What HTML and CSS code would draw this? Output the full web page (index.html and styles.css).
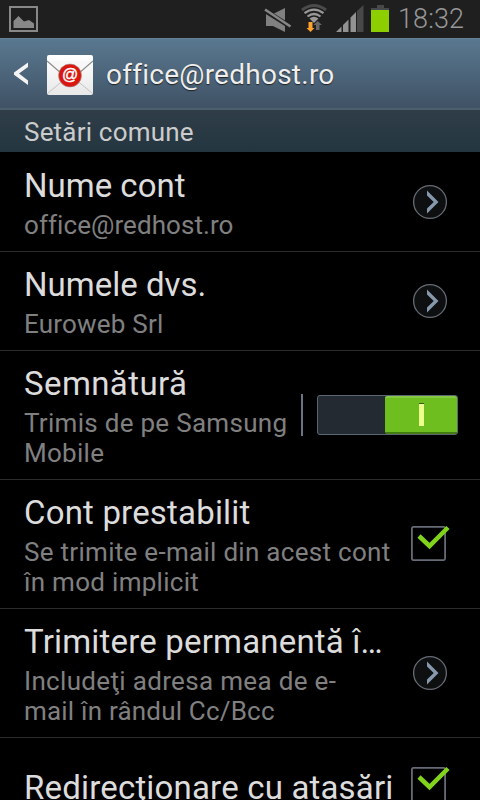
FILE: index.html
```html
<!DOCTYPE html>
<html lang="ro">
<head>
<meta charset="utf-8">
<title>office@redhost.ro</title>
<link rel="stylesheet" href="styles.css">
</head>
<body>
<svg class="defs" width="0" height="0">
  <symbol id="go" viewBox="0 0 36 36"><circle cx="18" cy="18" r="16.4" fill="#0d0f11" stroke="#666b73" stroke-width="1.3"/><path d="M15 6.500 26.500 18 15 29.500V24.500L21.700 18 15 11.500Z" fill="#8698ab"/></symbol>
  <symbol id="check" viewBox="0 0 40 38"><rect x="1.9" y="3.9" width="33.2" height="33.2" rx="1.5" fill="none" stroke="#666b75" stroke-width="1.8"/><path d="M9 13 19.5 23 38 4.500" fill="none" stroke="#82d31c" stroke-width="4.500"/></symbol>
</svg>
<div class="status">
  <svg class="shot" width="29" height="26" viewBox="0 0 29 26"><rect x="1" y="1" width="27" height="24" fill="none" stroke="#888" stroke-width="2"/><path d="M4.500 22V15L9.500 10 15 15.500 20 14 25 17.500V22Z" fill="#888"/></svg>
  <svg class="indicators" width="130" height="38" viewBox="260 0 130 38">
    <path d="M266 14H273L285 8V32L273 26H266Z" fill="#808080"/><path d="M264 10 291 27" stroke="#1f1f1f" stroke-width="5"/><path d="M265 9.500 290.500 26.500" stroke="#858585" stroke-width="2.600"/>
    <g fill="none" stroke-width="2.200"><path d="M302 10Q314 1 326 10" stroke="#4b4b4b" stroke-width="3"/><path d="M304.500 13.200Q314 6 323.500 13.200M307.500 16.500Q314 11.500 320.500 16.500" stroke="#999"/></g><path d="M309.500 18.500Q314 15 318.500 18.500L314 23Z" fill="#999"/>
    <path d="M308.500 22H312.500V28H314.500L310.500 32 306.500 28H308.500Z" fill="#ffa02f"/><path d="M316 30V25H313.500L317.700 21 322 25H319.500V30Z" fill="#666"/>
    <path d="M336 32 341.500 26.500V32ZM343 32V25L348.500 19.500V32ZM350.500 32V17.500L356 12V32Z" fill="#929292"/><path d="M357 32V11L363.500 5V32Z" fill="#484848"/>
    <path d="M377 5H384V8H389V10H371V8H377Z" fill="#484848"/><path d="M371 10H389V32H371Z" fill="#8dce00"/>
  </svg>
  <span class="clock">18:32</span>
</div>
<header class="bar">
  <svg class="back" width="14" height="24" viewBox="0 0 14 24"><path d="M14 .5V5L5 11.500 14 18.500V23L0 12.700V10.500Z" fill="#f4f4f4"/></svg>
  <svg class="mail" width="46" height="40" viewBox="0 0 46 40">
    <defs><linearGradient id="paper" x2="0" y2="1"><stop stop-color="#fff"/><stop offset="1" stop-color="#e8e8e8"/></linearGradient></defs>
    <rect width="46" height="40" rx="2" fill="url(#paper)"/><path d="M1 38 18 24M45 38 28 24" stroke="#c4c4c4"/><path d="M0 6 19 22.500Q23 25 27 22.500L46 6" fill="#f7f7f7" stroke="#8b8b8b" stroke-width="1.200"/>
    <circle cx="23" cy="20.500" r="11.500" fill="#d9170f" stroke="#a59c9c" stroke-width=".6"/><text class="at" x="23" y="25" text-anchor="middle">@</text>
  </svg>
  <h1>office@redhost.ro</h1>
</header>
<h2>Setări comune</h2>
<main>
  <section class="row first"><div class="copy"><div class="title t1">Nume cont</div><div class="summary s1">office@redhost.ro</div></div><svg class="go"><use href="#go"/></svg></section>
  <section class="row"><div class="copy"><div class="title t2">Numele dvs.</div><div class="summary s2">Euroweb Srl</div></div><svg class="go"><use href="#go"/></svg></section>
  <section class="row tall"><div class="copy"><div class="title t3">Semnătură</div><div class="summary s3">Trimis de pe Samsung<br>Mobile</div></div><div class="divider"></div><div class="switch"><div class="thumb"><i></i></div></div></section>
  <section class="row tall"><div class="copy"><div class="title t4">Cont prestabilit</div><div class="summary s4">Se trimite e-mail din acest cont<br>în mod implicit</div></div><svg class="check"><use href="#check"/></svg></section>
  <section class="row tall"><div class="copy"><div class="title t5">Trimitere permanentă î…</div><div class="summary s5">Includeţi adresa mea de e-<br><span class="line2">mail în rândul Cc/Bcc</span></div></div><svg class="go"><use href="#go"/></svg></section>
  <section class="row last"><div class="copy"><div class="title t6">Redirecţionare cu ataşări</div></div><svg class="check"><use href="#check"/></svg></section>
</main>
</body>
</html>
```
FILE: styles.css
```css
* { box-sizing: border-box; }
html, body { margin: 0; height: 800px; overflow: hidden; background: #000; }
body { width: 480px; font-family: Roboto, "Noto Sans", sans-serif; display: flex; flex-direction: column; }
.defs { display: block; flex: none; height: 0; }
.status { flex: none; height: 38px; background: #1f1f1f; display: flex; }
.shot { margin: 6px 221px 0 9px; flex: none; }
.indicators { flex: none; margin-left: 1px; }
.clock { margin: 3px 0 0 8px; font-size: 27px; line-height: 32px; color: #979797; letter-spacing: .1px; font-weight: 300; }
.bar { flex: none; height: 72px; display: flex; background: linear-gradient(#597890, #405265); border-bottom: 2px solid #4b5f6d; border-top: 1px solid #648096; }
.back { margin: 23px 19px 0 14px; flex: none; }
.mail { flex: none; margin-top: 16px; }
.at { font: 16px "Liberation Sans", sans-serif; fill: #fff; stroke: #fff; stroke-width: .4px; }
h1 { margin: 19px 0 0 13px; font-size: 28px; line-height: 34px; font-weight: 400; color: #eee; letter-spacing: .25px; text-shadow: 0 1px 1px #222; }
h2 { flex: none; margin: 0; height: 42px; padding: 7px 0 0 24px; font-size: 26px; line-height: 30px; font-weight: 400; color: #ccc; letter-spacing: .2px; background: linear-gradient(#303d49, #233640); }
.row { height: 99px; padding: 13px 32px 0 24px; border-bottom: 1px solid #2b2b2b; display: flex; }
.first { height: 100px; padding-top: 14px; }
.tall { height: 129px; }
.last { padding-top: 30px; }
.copy { flex: 1; min-width: 0; white-space: nowrap; }
.title { font-size: 33px; line-height: 39px; color: #dcdcdc; }
.summary { margin-top: 5px; font-size: 26px; line-height: 30px; color: #808080; }
.t3 { letter-spacing: .4px; }
.t4, .t5, .t6 { letter-spacing: .18px; }
.s1 { letter-spacing: .07px; }
.s2 { letter-spacing: .2px; }
.s3, .s4 { letter-spacing: .29px; }
.s5 { letter-spacing: .33px; }
.line2 { letter-spacing: .2px; }
.go { width: 36px; height: 36px; flex: none; margin-top: 18px; }
.tall .go { margin-top: 33px; }
.check { width: 40px; height: 38px; flex: none; margin: 30px -2px 0 0; }
.last .check { margin-top: -4px; }
.row:has(.switch) { padding-right: 22px; }
.divider { width: 2px; height: 42px; background: #667684; margin: 30px 14px 0 0; }
.switch { width: 141px; height: 40px; margin-top: 31px; padding-left: 67px; border: 1px solid #596773; border-radius: 3px; background: #242a31; display: flex; }
.thumb { flex: 1; background: #6fbe20; border-top: 2px solid #86c744; border-bottom: 2px solid #437d12; border-radius: 2px; display: flex; justify-content: center; }
.thumb i { width: 5px; height: 23px; margin-top: 5px; background: #edff8d; border-top: 1px solid #385f10; }
```
